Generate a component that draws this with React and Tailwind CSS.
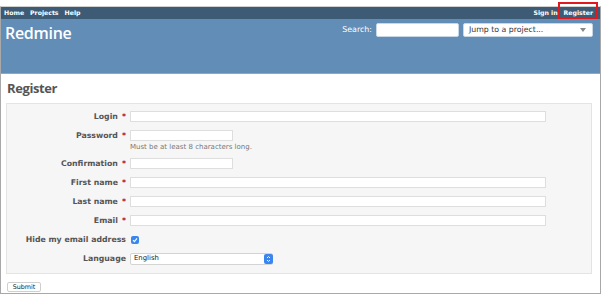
import React from 'react';

const Row = ({ label, required, children, className = '' }) => (
  <div className={`flex items-center h-[19px] ${className}`}>
    <label className="w-[119px] text-right font-bold text-[7.8px] text-[#555] whitespace-nowrap">
      {label}
      {required && <span className="text-[#bb0000] ml-[4px]">*</span>}
    </label>
    <div className="ml-[4px] flex items-center">{children}</div>
  </div>
);

const Input = ({ w = 'w-[416px]' }) => (
  <div className={`${w} h-[11px] bg-white border border-[#dedede]`} />
);

export default function App() {
  return (
    <div
      className="relative w-[602px] h-[295px] bg-white pt-[6px] overflow-hidden"
      style={{ fontFamily: '"DejaVu Sans", Verdana, sans-serif' }}
    >
      <div className="w-[601px] h-[288px] border border-[#a8a8a8] border-t-[#d0d0d0] flex flex-col">
        {/* top menu */}
        <div className="h-[12px] bg-[#3e5b76] flex items-center justify-between pl-[3px] pr-[7px] text-white font-bold text-[6.2px]">
          <div className="flex gap-[6px]">
            <span>Home</span>
            <span>Projects</span>
            <span>Help</span>
          </div>
          <div className="flex gap-[6px]">
            <span>Sign in</span>
            <span>Register</span>
          </div>
        </div>

        {/* header */}
        <div className="h-[55px] bg-[#628db6] border-b border-[#8aa9c6] flex items-start justify-between pl-[4px] pr-[7px]">
          <h1
            className="text-white font-semibold text-[16px] tracking-[-0.3px] leading-none mt-[6px]"
            style={{ fontFamily: '"Open Sans", sans-serif' }}
          >
            Redmine
          </h1>
          <div className="flex items-center mt-[4px]">
            <span className="text-white text-[7.9px] mr-[4px]">Search:</span>
            <div className="w-[83px] h-[14px] bg-white rounded-[2px] border border-[#c9d6e3]" />
            <div className="ml-[4px] w-[130px] h-[14px] bg-white rounded-[2px] border border-[#c9d6e3] flex items-center justify-between pl-[5px] pr-[6px]">
              <span className="text-[7.8px] text-[#333]">Jump to a project...</span>
              <svg width="6" height="4" viewBox="0 0 6 4">
                <path d="M0 0 L6 0 L3 4 Z" fill="#888" />
              </svg>
            </div>
          </div>
        </div>

        {/* content */}
        <div className="pl-[5px] pr-[8px]">
          <h2
            className="text-[#555] font-bold text-[13px] tracking-[-0.4px] leading-none mt-[8px] ml-[1px]"
            style={{ fontFamily: '"Open Sans", sans-serif' }}
          >
            Register
          </h2>

          <div className="mt-[8px] h-[171px] bg-[#f6f6f6] border border-[#e4e4e4] pt-[3px]">
            <Row label="Login" required>
              <Input />
            </Row>
            <Row label="Password" required>
              <Input w="w-[103px]" />
            </Row>
            <div className="h-[9px] -mt-[2px] mb-[2px] pl-[123px] text-[7px] leading-[9px] text-[#777]">
              Must be at least 8 characters long.
            </div>
            <Row label="Confirmation" required>
              <Input w="w-[103px]" />
            </Row>
            <Row label="First name" required>
              <Input />
            </Row>
            <Row label="Last name" required>
              <Input />
            </Row>
            <Row label="Email" required>
              <Input />
            </Row>
            <Row label="Hide my email address">
              <div className="ml-[1px] w-[8px] h-[8px] rounded-[2px] bg-[#3a86ee] flex items-center justify-center">
                <svg width="6" height="6" viewBox="0 0 6 6">
                  <path d="M1 3.2 L2.4 4.6 L5 1.4" stroke="white" strokeWidth="1.1" fill="none" />
                </svg>
              </div>
            </Row>
            <Row label="Language">
              <div className="w-[143px] h-[12px] bg-white border border-[#d4d4d4] rounded-[2px] flex items-center justify-between pl-[3px]">
                <span className="text-[6.9px] text-[#222]">English</span>
                <div className="w-[9px] h-[10px] bg-[#3a86ee] rounded-[2px] flex items-center justify-center mr-[-1px]">
                  <svg width="5" height="8" viewBox="0 0 5 8">
                    <path d="M1 3 L2.5 1.5 L4 3 M1 5 L2.5 6.5 L4 5" stroke="white" strokeWidth="0.9" fill="none" />
                  </svg>
                </div>
              </div>
            </Row>
          </div>

          <div className="mt-[8px] ml-[1px] w-[34px] h-[10px] bg-white border border-[#cfcfcf] rounded-[2px] text-[6.4px] leading-none text-[#222] flex items-center justify-center">
            Submit
          </div>
        </div>
      </div>

      {/* highlight around Register link */}
      <div className="absolute left-[558px] top-[2px] w-[40px] h-[17px] border-2 border-[#e0191f]" />
    </div>
  );
}
